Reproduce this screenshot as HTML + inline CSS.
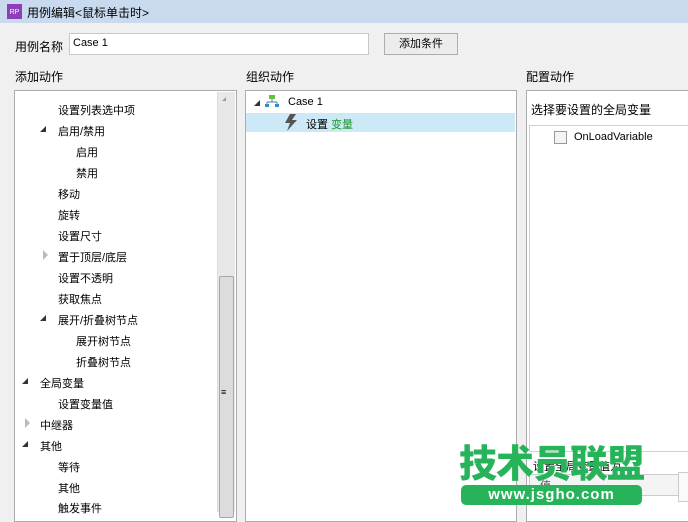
<!DOCTYPE html>
<html><head><meta charset="utf-8"><style>
body{margin:0;width:688px;height:510px;overflow:hidden;background:#f0f0f0;font-family:"Liberation Sans","Noto Sans CJK SC",sans-serif;font-size:12px;color:#000;position:relative}
.a{position:absolute}
.title{left:0;top:0;width:688px;height:23px;background:#c9daef}
.panel{background:#fff;border:1px solid #acacac}
.it{position:absolute;font-size:11px;white-space:nowrap}
.tri{position:absolute;width:0;height:0;border-left:6px solid transparent;border-bottom:6px solid #333}
.tro{position:absolute;width:0;height:0;border-top:5px solid transparent;border-bottom:5px solid transparent;border-left:5px solid #bbb}
</style></head><body>
<div class="a title"></div>
<div class="a" style="left:7px;top:4px;width:15px;height:15px;background:#8c3fb8;color:#fff;font-size:7px;line-height:17px;text-align:center">RP</div>
<div class="a" style="left:27px;top:4px;font-size:12px">用例编辑&lt;鼠标单击时&gt;</div>
<div class="a" style="left:15px;top:38px">用例名称</div>
<div class="a" style="left:69px;top:33px;width:298px;height:20px;background:#fff;border:1px solid #c8c8c8"></div>
<div class="a" style="left:73px;top:37px;font-size:11px">Case 1</div>
<div class="a" style="left:384px;top:33px;width:72px;height:20px;background:#ececec;border:1px solid #adadad;text-align:center;line-height:20px;font-size:11px">添加条件</div>
<div class="a" style="left:15px;top:68px">添加动作</div>
<div class="a" style="left:246px;top:68px">组织动作</div>
<div class="a" style="left:526px;top:68px">配置动作</div>

<div class="a panel" style="left:14px;top:90px;width:221px;height:430px"></div>
<div class="a" style="left:217px;top:92px;width:17px;height:420px;background:#e8e8e8;border-left:1px solid #ddd"></div>
<div class="a" style="left:219px;top:276px;width:13px;height:240px;background:#dcdcdc;border:1px solid #a8a8a8;border-radius:2px"></div>
<div class="a" style="left:221px;top:387px;font-size:9px">≡</div>
<div class="tri" style="left:222px;top:97px;border-bottom-color:#999;border-left-width:4px;border-bottom-width:4px"></div>

<div class="it" style="left:58px;top:102px">设置列表选中项</div>
<div class="tri" style="left:40px;top:126px"></div><div class="it" style="left:58px;top:123px">启用/禁用</div>
<div class="it" style="left:76px;top:144px">启用</div>
<div class="it" style="left:76px;top:165px">禁用</div>
<div class="it" style="left:58px;top:186px">移动</div>
<div class="it" style="left:58px;top:207px">旋转</div>
<div class="it" style="left:58px;top:228px">设置尺寸</div>
<div class="tro" style="left:43px;top:250px"></div><div class="it" style="left:58px;top:249px">置于顶层/底层</div>
<div class="it" style="left:58px;top:270px">设置不透明</div>
<div class="it" style="left:58px;top:291px">获取焦点</div>
<div class="tri" style="left:40px;top:315px"></div><div class="it" style="left:58px;top:312px">展开/折叠树节点</div>
<div class="it" style="left:76px;top:333px">展开树节点</div>
<div class="it" style="left:76px;top:354px">折叠树节点</div>
<div class="tri" style="left:22px;top:378px"></div><div class="it" style="left:40px;top:375px">全局变量</div>
<div class="it" style="left:58px;top:396px">设置变量值</div>
<div class="tro" style="left:25px;top:418px"></div><div class="it" style="left:40px;top:417px">中继器</div>
<div class="tri" style="left:22px;top:441px"></div><div class="it" style="left:40px;top:438px">其他</div>
<div class="it" style="left:58px;top:459px">等待</div>
<div class="it" style="left:58px;top:480px">其他</div>
<div class="it" style="left:58px;top:500px">触发事件</div>

<div class="a panel" style="left:245px;top:90px;width:270px;height:430px"></div>
<div class="tri" style="left:254px;top:100px"></div>
<svg class="a" style="left:265px;top:95px" width="14" height="13"><rect x="4" y="0" width="6" height="4" fill="#6cbf3a"/><path d="M7 4v3M2 7h10M2 7v2M12 7v2" stroke="#3a8ac0" fill="none"/><rect x="0" y="9" width="4" height="3" fill="#3a8ac0"/><rect x="10" y="9" width="4" height="3" fill="#3a8ac0"/></svg>
<div class="it" style="left:288px;top:96px">Case 1</div>
<div class="a" style="left:246px;top:113px;width:269px;height:19px;background:#cde8f6"></div>
<svg class="a" style="left:284px;top:114px" width="14" height="17"><path d="M6 0L1 9h5L3 17 13 6H8L12 0z" fill="#555"/></svg>
<div class="it" style="left:306px;top:116px">设置 <span style="color:#1a9a2a">变量</span></div>

<div class="a panel" style="left:526px;top:90px;width:170px;height:430px"></div>
<div class="a" style="left:531px;top:101px">选择要设置的全局变量</div>
<div class="a" style="left:529px;top:125px;width:170px;height:325px;background:#fff;border:1px solid #d0d0d0"></div>
<div class="a" style="left:554px;top:131px;width:11px;height:11px;border:1px solid #999;background:#f4f4f4"></div>
<div class="it" style="left:574px;top:131px">OnLoadVariable</div>
<div class="a" style="left:529px;top:474px;width:155px;height:20px;background:#f4f4f4;border:1px solid #ccc"></div>
<div class="a" style="left:678px;top:472px;width:10px;height:28px;border:1px solid #ccc;background:#fafafa"></div>
<div class="it" style="left:533px;top:458px">设置全局变量值为</div>
<div class="it" style="left:540px;top:477px;color:#555">值</div>

<div class="a" style="left:459px;top:441px;font-family:'Noto Sans CJK SC',sans-serif;font-weight:900;font-size:38px;line-height:40px;color:#27b35a;letter-spacing:-1px">技术员联盟</div>
<div class="a" style="left:461px;top:485px;width:181px;height:20px;background:#27b35a;border-radius:5px;color:#fff;font-weight:bold;font-size:15px;line-height:20px;text-align:center;letter-spacing:1px">www.jsgho.com</div>
</body></html>
